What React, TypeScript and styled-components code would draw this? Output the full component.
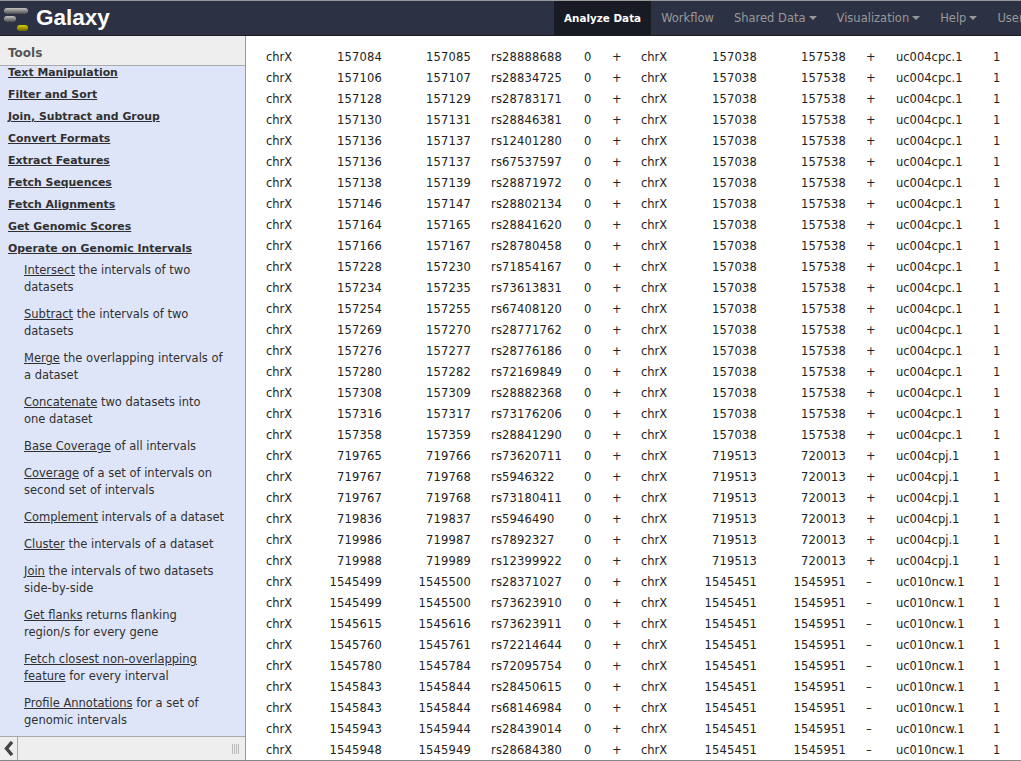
import * as React from 'react';
import styled, { createGlobalStyle } from 'styled-components';

const GlobalStyle = createGlobalStyle`
  html, body {
    margin: 0;
    height: 100%;
    overflow: hidden;
  }
  body {
    font-family: 'DejaVu Sans', Verdana, sans-serif;
    font-size: 12px;
    color: #303030;
    background: #fff;
  }
`;

const NAV_ITEMS = [
  { label: 'Analyze Data', active: true },
  { label: 'Workflow' },
  { label: 'Shared Data', menu: true },
  { label: 'Visualization', menu: true },
  { label: 'Help', menu: true },
  { label: 'User', menu: true },
];

const SECTIONS = [
  'Text Manipulation',
  'Filter and Sort',
  'Join, Subtract and Group',
  'Convert Formats',
  'Extract Features',
  'Fetch Sequences',
  'Fetch Alignments',
  'Get Genomic Scores',
  'Operate on Genomic Intervals',
];

const TOOLS = [
  { link: 'Intersect', rest: ' the intervals of two datasets' },
  { link: 'Subtract', rest: ' the intervals of two datasets' },
  { link: 'Merge', rest: ' the overlapping intervals of a dataset' },
  { link: 'Concatenate', rest: ' two datasets into one dataset' },
  { link: 'Base Coverage', rest: ' of all intervals' },
  { link: 'Coverage', rest: ' of a set of intervals on second set of intervals' },
  { link: 'Complement', rest: ' intervals of a dataset' },
  { link: 'Cluster', rest: ' the intervals of a dataset' },
  { link: 'Join', rest: ' the intervals of two datasets side-by-side' },
  { link: 'Get flanks', rest: ' returns flanking region/s for every gene' },
  { link: 'Fetch closest non-overlapping feature', rest: ' for every interval' },
  { link: 'Profile Annotations', rest: ' for a set of genomic intervals' },
];

const CPC = [157038, 157538, '+', 'uc004cpc.1'] as const;
const CPJ = [719513, 720013, '+', 'uc004cpj.1'] as const;
const NCW = [1545451, 1545951, '–', 'uc010ncw.1'] as const;

const ROWS: [number, number, string, readonly [number, number, string, string]][] = [
  [157084, 157085, 'rs28888688', CPC],
  [157106, 157107, 'rs28834725', CPC],
  [157128, 157129, 'rs28783171', CPC],
  [157130, 157131, 'rs28846381', CPC],
  [157136, 157137, 'rs12401280', CPC],
  [157136, 157137, 'rs67537597', CPC],
  [157138, 157139, 'rs28871972', CPC],
  [157146, 157147, 'rs28802134', CPC],
  [157164, 157165, 'rs28841620', CPC],
  [157166, 157167, 'rs28780458', CPC],
  [157228, 157230, 'rs71854167', CPC],
  [157234, 157235, 'rs73613831', CPC],
  [157254, 157255, 'rs67408120', CPC],
  [157269, 157270, 'rs28771762', CPC],
  [157276, 157277, 'rs28776186', CPC],
  [157280, 157282, 'rs72169849', CPC],
  [157308, 157309, 'rs28882368', CPC],
  [157316, 157317, 'rs73176206', CPC],
  [157358, 157359, 'rs28841290', CPC],
  [719765, 719766, 'rs73620711', CPJ],
  [719767, 719768, 'rs5946322', CPJ],
  [719767, 719768, 'rs73180411', CPJ],
  [719836, 719837, 'rs5946490', CPJ],
  [719986, 719987, 'rs7892327', CPJ],
  [719988, 719989, 'rs12399922', CPJ],
  [1545499, 1545500, 'rs28371027', NCW],
  [1545499, 1545500, 'rs73623910', NCW],
  [1545615, 1545616, 'rs73623911', NCW],
  [1545760, 1545761, 'rs72214644', NCW],
  [1545780, 1545784, 'rs72095754', NCW],
  [1545843, 1545844, 'rs28450615', NCW],
  [1545843, 1545844, 'rs68146984', NCW],
  [1545943, 1545944, 'rs28439014', NCW],
  [1545948, 1545949, 'rs28684380', NCW],
];

const Page = styled.div`
  display: flex;
  flex-direction: column;
  height: 761px;
  overflow: hidden;
`;

const Masthead = styled.header`
  flex: none;
  display: flex;
  justify-content: space-between;
  height: 34px;
  background: #2c3143;
  border-top: 1px solid #999;
  border-bottom: 1px solid #1a1d26;
  overflow: hidden;
`;

const Brand = styled.div`
  display: flex;
  align-items: center;
  gap: 7px;
  padding-left: 4px;
  color: #fff;
  font-family: 'Liberation Sans', Arial, sans-serif;
  font-size: 22.5px;
  font-weight: bold;
`;

const Nav = styled.nav`
  display: flex;
  flex: none;
  width: 467px;
  overflow: hidden;
`;

const NavItem = styled.div<{ $active?: boolean }>`
  flex: none;
  display: flex;
  align-items: center;
  gap: 3px;
  padding: 0 10px;
  background: ${(p) => (p.$active ? '#181a24' : 'transparent')};
  color: ${(p) => (p.$active ? '#fff' : '#999')};
  font-weight: ${(p) => (p.$active ? 'bold' : 'normal')};
  font-size: ${(p) => (p.$active ? '10.4px' : '11.5px')};
`;

const Caret = styled.span`
  width: 0;
  height: 0;
  border-left: 4px solid transparent;
  border-right: 4px solid transparent;
  border-top: 4px solid #999;
`;

const Body = styled.div`
  flex: 1;
  display: flex;
  min-height: 0;
  border-bottom: 1px solid #888;
`;

const Sidebar = styled.aside`
  flex: none;
  width: 245px;
  display: flex;
  flex-direction: column;
  background: #dfe5f9;
  border-right: 1px solid #999;
`;

const SidebarTitle = styled.div`
  flex: none;
  box-sizing: border-box;
  height: 30px;
  padding: 10px 8px 0;
  background: #eee;
  border-bottom: 1px solid #a9a9a9;
  color: #555;
  font-size: 12px;
  font-weight: 600;
`;

const ToolList = styled.div`
  flex: 1;
  min-height: 0;
  overflow: hidden;
  padding: 1px 8px 0;
`;

const SectionTitle = styled.div`
  height: 22px;
  line-height: 12px;
  font-size: 10.9px;
  font-weight: bold;
  color: #303030;
  text-decoration: underline;
`;

const ToolGroup = styled.div`
  display: flex;
  flex-direction: column;
  gap: 10px;
  margin-top: -3px;
  padding: 0 12px 0 16px;
`;

const ToolRow = styled.div`
  line-height: 17px;
  font-size: 11.5px;
  color: #303030;
`;

const ToolLink = styled.span`
  text-decoration: underline;
`;

const SidebarFooter = styled.div`
  flex: none;
  box-sizing: border-box;
  height: 24px;
  display: flex;
  align-items: center;
  justify-content: space-between;
  background: #eee;
  border-top: 1px solid #a9a9a9;
`;

const CollapseButton = styled.div`
  width: 17px;
  height: 100%;
  display: flex;
  align-items: center;
  justify-content: center;
  border-right: 1px solid #a9a9a9;
`;

const Grip = styled.div`
  width: 7px;
  height: 10px;
  margin-right: 6px;
  background: repeating-linear-gradient(to right, #bbb 0 1px, transparent 1px 2px);
`;

const Content = styled.main`
  flex: 1;
  min-width: 0;
  overflow: hidden;
  padding: 10px 0 0 20px;
`;

const DataTable = styled.table`
  border-collapse: collapse;
  table-layout: fixed;
  width: 753px;
  font-size: 11.5px;
  color: #222;
`;

const Cell = styled.td<{ $w: number; $align?: string; $pad?: number; $num?: boolean }>`
  width: ${(p) => p.$w}px;
  height: 21px;
  padding: 0 0 0 ${(p) => p.$pad ?? 0}px;
  box-sizing: border-box;
  text-align: ${(p) => p.$align ?? 'left'};
  letter-spacing: ${(p) => (p.$num ? '0.18px' : '0')};
  white-space: nowrap;
`;

const GalaxyLogo = () => (
  <svg width="25" height="26" viewBox="0 0 25 26">
    <defs>
      <linearGradient id="bar" x1="0" y1="0" x2="0" y2="1">
        <stop offset="0" stopColor="#c4c4c4" />
        <stop offset="1" stopColor="#4a4a4a" />
      </linearGradient>
      <linearGradient id="gold" x1="0" y1="0" x2="0" y2="1">
        <stop offset="0" stopColor="#d8d000" />
        <stop offset="1" stopColor="#6a6400" />
      </linearGradient>
    </defs>
    <rect x="0" y="3" width="24" height="6" rx="3" fill="url(#bar)" />
    <rect x="0" y="11" width="12" height="6" rx="3" fill="url(#bar)" />
    <rect x="13" y="20" width="11" height="6" rx="3" fill="url(#gold)" />
  </svg>
);

const App: React.FC = () => (
  <Page>
    <GlobalStyle />
    <Masthead>
      <Brand>
        <GalaxyLogo />
        Galaxy
      </Brand>
      <Nav>
        {NAV_ITEMS.map((item) => (
          <NavItem key={item.label} $active={item.active}>
            {item.label}
            {item.menu && <Caret />}
          </NavItem>
        ))}
      </Nav>
    </Masthead>
    <Body>
      <Sidebar>
        <SidebarTitle>Tools</SidebarTitle>
        <ToolList>
          {SECTIONS.map((s) => (
            <SectionTitle key={s}>{s}</SectionTitle>
          ))}
          <ToolGroup>
            {TOOLS.map((t) => (
              <ToolRow key={t.link}>
                <ToolLink>{t.link}</ToolLink>
                {t.rest}
              </ToolRow>
            ))}
          </ToolGroup>
        </ToolList>
        <SidebarFooter>
          <CollapseButton>
            <svg width="10" height="15" viewBox="0 0 10 15">
              <path d="M8 1 2.5 7.5 8 14" fill="none" stroke="#444" strokeWidth="3.4" />
            </svg>
          </CollapseButton>
          <Grip />
        </SidebarFooter>
      </Sidebar>
      <Content>
        <DataTable>
          <tbody>
            {ROWS.map(([start, end, id, [s2, e2, strand, uc]], i) => (
              <tr key={i}>
                <Cell $w={60}>chrX</Cell>
                <Cell $w={56} $align="right" $num>{start}</Cell>
                <Cell $w={89} $align="right" $num>{end}</Cell>
                <Cell $w={113} $pad={20} $num>{id}</Cell>
                <Cell $w={28}>0</Cell>
                <Cell $w={29}>+</Cell>
                <Cell $w={50}>chrX</Cell>
                <Cell $w={66} $align="right" $num>{s2}</Cell>
                <Cell $w={89} $align="right" $num>{e2}</Cell>
                <Cell $w={50} $pad={20}>{strand}</Cell>
                <Cell $w={97}>{uc}</Cell>
                <Cell $w={26}>1</Cell>
              </tr>
            ))}
          </tbody>
        </DataTable>
      </Content>
    </Body>
  </Page>
);

export default App;
